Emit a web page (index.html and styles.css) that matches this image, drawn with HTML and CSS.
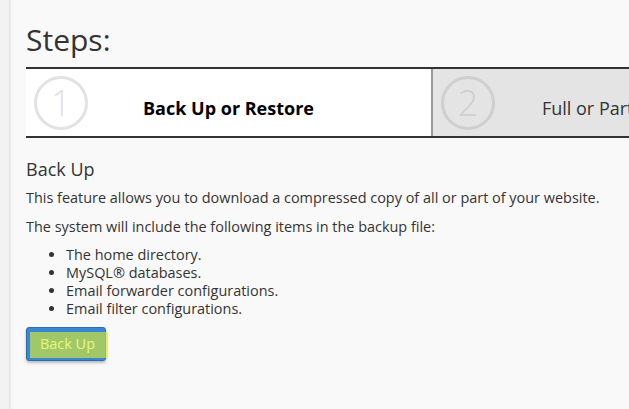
FILE: index.html
```html
<!DOCTYPE html>
<html>
	<head>
		<title>Backup Wizard</title>
		<meta charset="utf-8">
		<link rel="stylesheet" href="styles.css">
	</head>
	<body>
		<div class="page">
			<div class="side-edge"></div>
			<div class="content">
				<h1 class="page-title">Steps:</h1>
				<div class="steps">
					<div class="step step-active">
						<svg class="step-num" width="58" height="58" viewBox="0 0 58 58">
							<circle cx="29" cy="29" r="25.5" fill="none" stroke="#e2e2e2" stroke-width="3"/>
							<text x="29" y="42" text-anchor="middle" font-size="36" font-weight="300" fill="#e2e2e2">1</text>
						</svg>
						<span class="step-label">Back Up or Restore</span>
					</div>
					<div class="step step-next">
						<svg class="step-num" width="58" height="58" viewBox="0 0 58 58">
							<circle cx="29" cy="29" r="25.5" fill="none" stroke="#cfcfcf" stroke-width="3"/>
							<text x="29" y="42" text-anchor="middle" font-size="36" font-weight="300" fill="#cfcfcf">2</text>
						</svg>
						<span class="step-label">Full or Partial Backup</span>
					</div>
				</div>

				<h2 class="section-title">Back Up</h2>
				<p class="text">This feature allows you to download a compressed copy of all or part of your website.</p>
				<p class="text">The system will include the following items in the backup file:</p>
				<ul class="items">
					<li>The home directory.</li>
					<li>MySQL® databases.</li>
					<li>Email forwarder configurations.</li>
					<li>Email filter configurations.</li>
				</ul>
				<div class="btn-wrap">
					<a class="btn-primary">Back Up</a>
					<span class="highlight"></span>
				</div>
			</div>
		</div>
	</body>
</html>
```

FILE: styles.css
```css
body {
  margin: 0px;
  background-color: #f9f9f9;
  font-family: 'Open Sans', 'Noto Sans', sans-serif;
  color: #333333;
  overflow: hidden;
}

.page{
  display: flex;
  min-height: 409px;
}

.side-edge{
  width: 10px;
  flex-shrink: 0;
  background: linear-gradient(to right, #f2f2f2 0px, #f2f2f2 8px, #e2e2e2 10px);
  box-shadow: 1px 0 2px rgba(0,0,0,0.08);
}

.content{
  padding-left: 16px;
  flex: 1;
  min-width: 0;
  overflow: hidden;
}

.page-title{
  margin: 22px 0 9px 0;
  font-size: 30px;
  font-weight: 400;
  line-height: 36px;
  color: #333333;
}

.steps{
  display: flex;
  border-top: 2px solid #333333;
  border-bottom: 2px solid #333333;
  height: 67px;
  width: 820px;
}

.step{
  width: 405px;
  flex-shrink: 0;
  position: relative;
  display: flex;
  align-items: center;
  justify-content: center;
}

.step-active{
  background-color: #ffffff;
}

.step-next{
  width: 395px;
  background-color: #e4e4e4;
  border-left: 2px solid #999999;
}

.step-num{
  position: absolute;
  left: 6px;
  top: 5px;
}

.step-label{
  font-size: 18px;
  padding-top: 10px;
  white-space: nowrap;
}

.step-active .step-label{
  font-weight: 700;
  color: #000000;
}

.section-title{
  margin: 19px 0 7px 0;
  font-size: 18px;
  font-weight: 400;
  line-height: 24px;
}

.text{
  margin: 0 0 10px 0;
  font-size: 14.45px;
  line-height: 19px;
}

.items{
  margin: 0;
  padding-left: 40px;
  font-size: 14.45px;
  line-height: 18px;
}

.btn-wrap{
  position: relative;
  margin-top: 9px;
  width: 80px;
  height: 34px;
}

.btn-primary{
  display: block;
  box-sizing: border-box;
  width: 80px;
  height: 34px;
  padding: 6px 0 0 13px;
  background-color: #3a87d1;
  border: 1px solid #2d6fae;
  border-radius: 3px;
  box-shadow: 0 2px 3px rgba(0,0,0,0.25);
  color: #ffffff;
  font-size: 14.45px;
  line-height: 20px;
}

.highlight{
  position: absolute;
  left: 4px;
  top: 5px;
  width: 78px;
  height: 26px;
  background-color: rgba(222, 240, 40, 0.62);
}
```
